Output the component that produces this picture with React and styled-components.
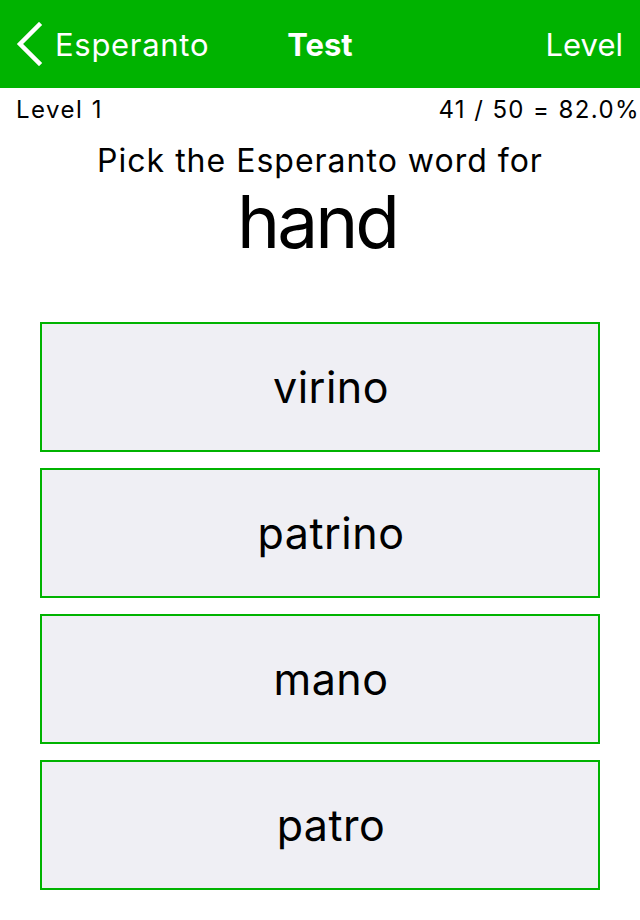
import React from "react";
import styled, { createGlobalStyle } from "styled-components";

const GlobalStyle = createGlobalStyle`
  html, body {
    margin: 0;
    padding: 0;
    background: #ffffff;
  }
  body {
    font-family: Inter, "Liberation Sans", Arial, sans-serif;
    color: #000;
  }
  * { box-sizing: border-box; }
`;

const Screen = styled.div`
  width: 640px;
  height: 920px;
  display: flex;
  flex-direction: column;
  background: #fff;
  overflow: hidden;
`;

const NavBar = styled.header`
  height: 88px;
  background: #00b300;
  display: grid;
  grid-template-columns: 1fr auto 1fr;
  align-items: center;
  color: #fff;
  font-size: 31px;
`;

const BackButton = styled.div`
  display: flex;
  align-items: center;
  gap: 12px;
  padding-left: 15px;
`;

const BackLabel = styled.span`
  letter-spacing: 0.7px;
`;

const NavTitle = styled.div`
  font-weight: 700;
`;

const NavAction = styled.div`
  justify-self: end;
  padding-right: 17px;
`;

const StatsRow = styled.div`
  height: 44px;
  display: flex;
  justify-content: space-between;
  align-items: center;
  padding: 0 0 0 16px;
  font-size: 24px;
  line-height: 44px;
`;

const Stat = styled.span`
  letter-spacing: ${(p) => p.$spacing}px;
`;

const Prompt = styled.div`
  text-align: center;
  font-size: 32px;
  line-height: 57px;
  letter-spacing: 1px;
`;

const Word = styled.div`
  text-align: center;
  font-size: 73px;
  line-height: 65px;
  letter-spacing: -3px;
  padding-right: 6px;
`;

const Options = styled.div`
  margin: 68px 40px 0;
  display: flex;
  flex-direction: column;
  gap: 16px;
`;

const Option = styled.button`
  height: 130px;
  width: 100%;
  background: #efeff4;
  border: 2px solid #00b300;
  border-radius: 0;
  font-family: inherit;
  font-size: 43px;
  letter-spacing: 0.5px;
  color: #000;
  display: flex;
  align-items: center;
  justify-content: center;
  padding: 0 0 0 22px;
`;

const Chevron = () => (
  <svg width="28" height="44" viewBox="0 0 28 44" aria-hidden="true">
    <polyline
      points="24,3 5,22 24,41"
      fill="none"
      stroke="#fff"
      strokeWidth="4.5"
      strokeLinecap="square"
      strokeLinejoin="miter"
    />
  </svg>
);

const choices = ["virino", "patrino", "mano", "patro"];

export default function App() {
  return (
    <>
      <GlobalStyle />
      <Screen>
        <NavBar>
          <BackButton>
            <Chevron />
            <BackLabel>Esperanto</BackLabel>
          </BackButton>
          <NavTitle>Test</NavTitle>
          <NavAction>Level</NavAction>
        </NavBar>
        <StatsRow>
          <Stat $spacing={1.5}>Level 1</Stat>
          <Stat $spacing={1.4}>41 / 50 = 82.0%</Stat>
        </StatsRow>
        <Prompt>Pick the Esperanto word for</Prompt>
        <Word>hand</Word>
        <Options>
          {choices.map((c) => (
            <Option key={c}>{c}</Option>
          ))}
        </Options>
      </Screen>
    </>
  );
}
